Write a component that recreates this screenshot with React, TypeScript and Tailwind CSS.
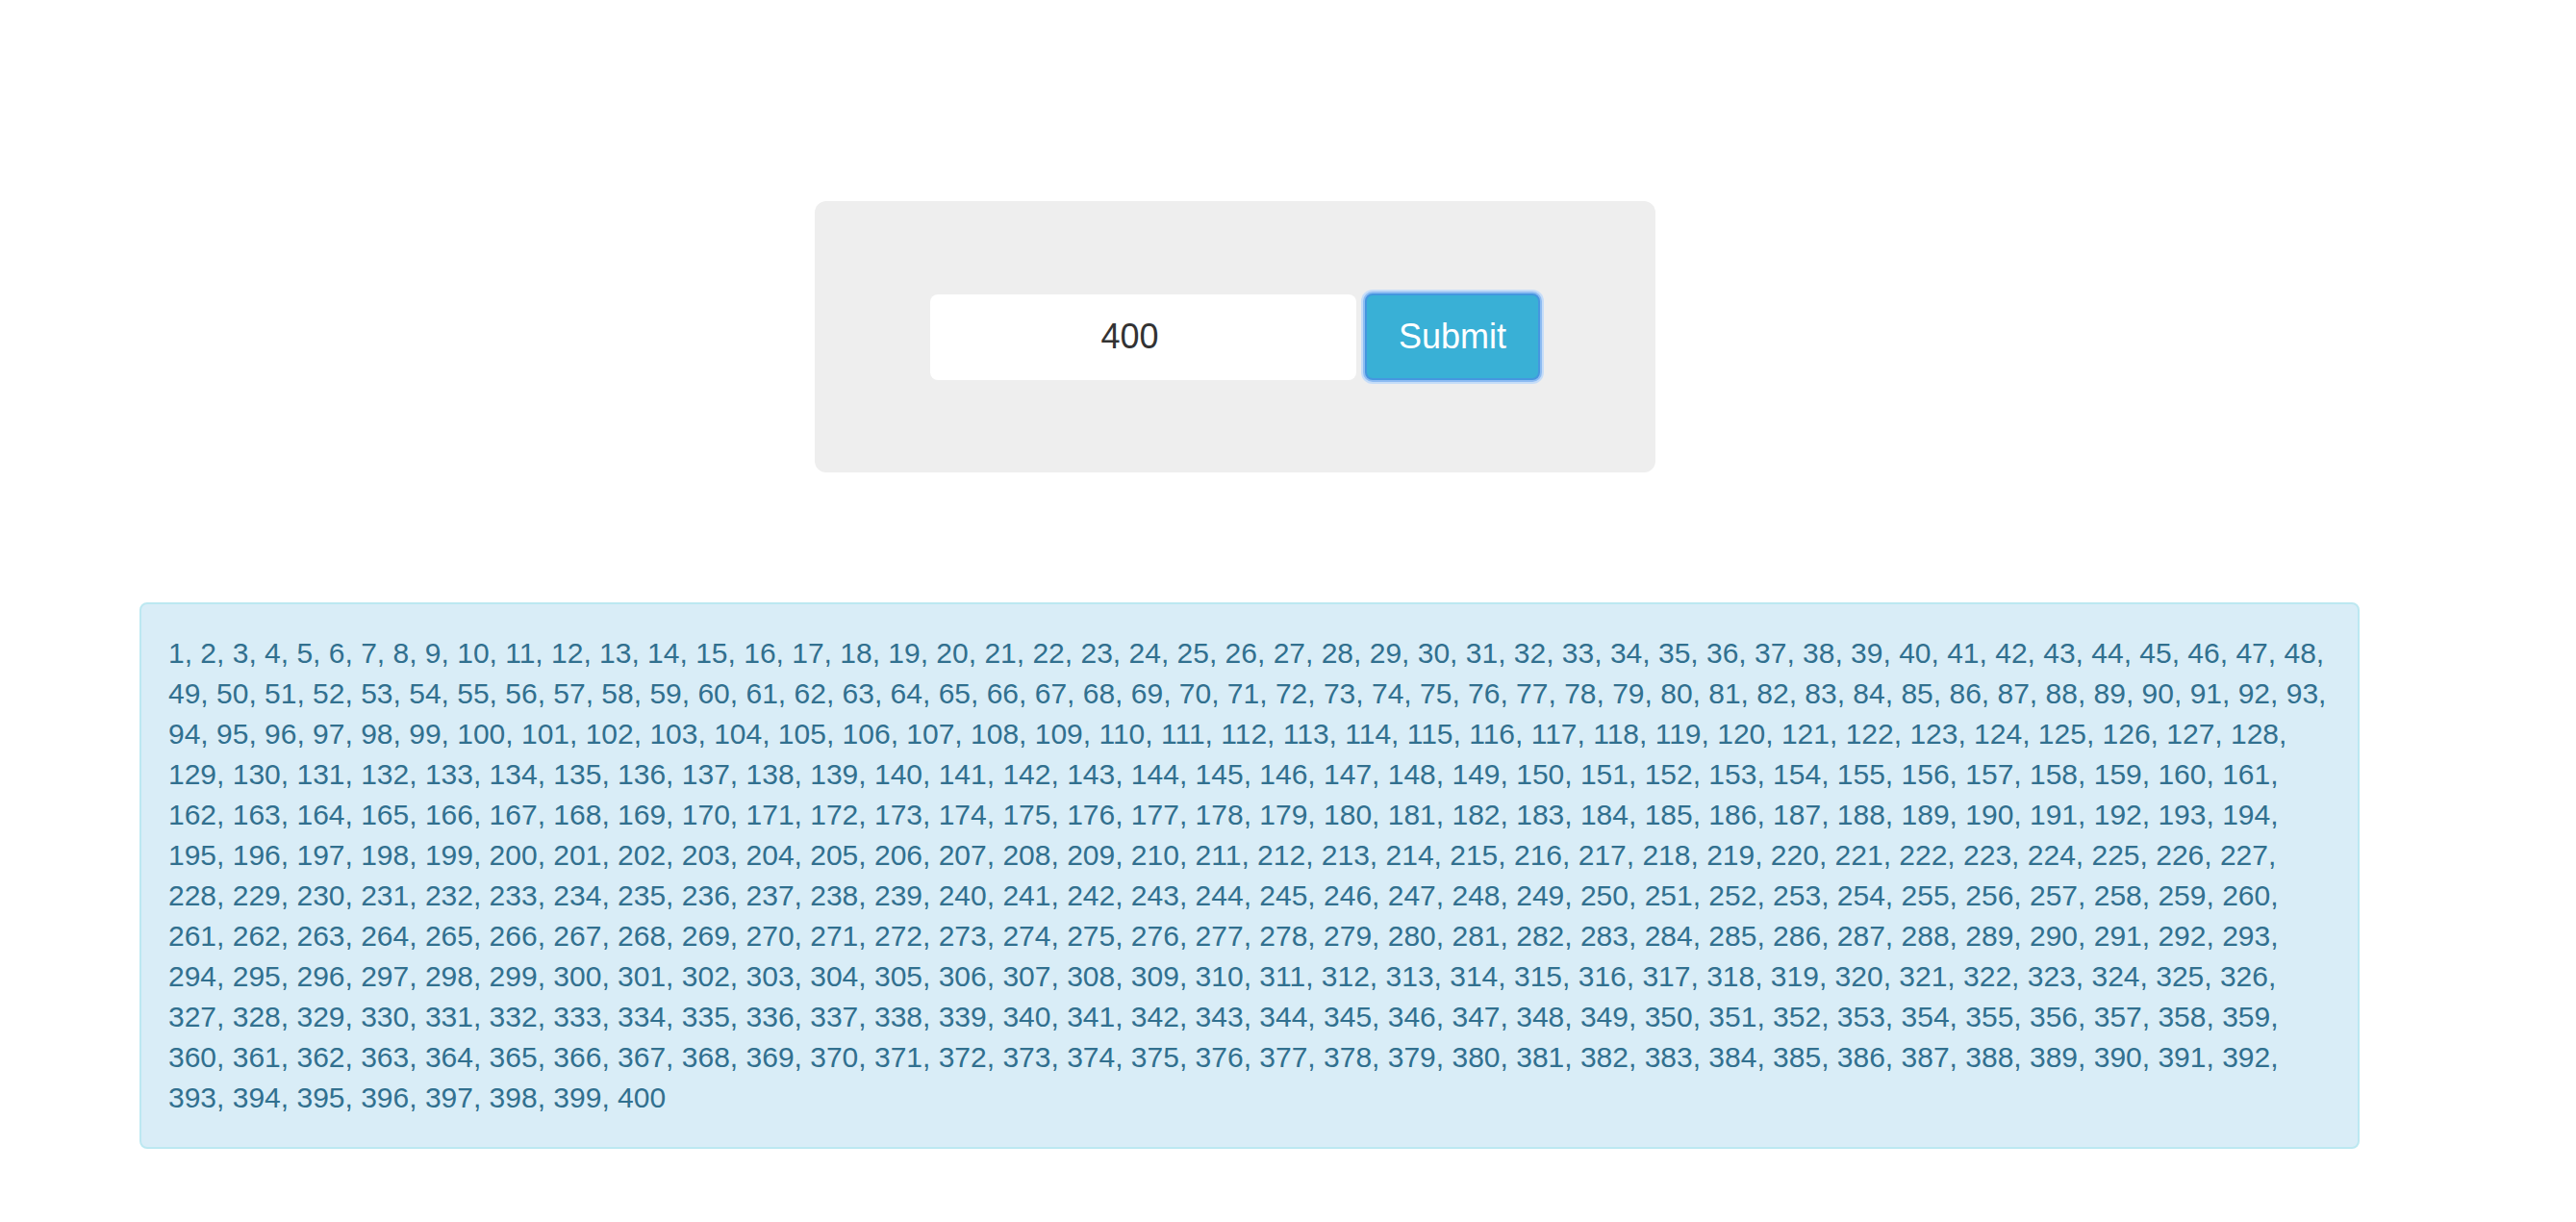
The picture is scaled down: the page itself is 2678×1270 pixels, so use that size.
import { useState } from "react";

export default function App() {
  const [value, setValue] = useState("400");
  const count = parseInt(value, 10) || 0;
  const numbers = Array.from({ length: count }, (_, i) => i + 1).join(", ");

  return (
    <div
      className="min-h-screen bg-white pt-[209px] pb-[60px]"
      style={{ fontFamily: '"Liberation Sans", Arial, sans-serif' }}
    >
      {/* Form panel */}
      <div className="ml-[847px] w-[874px] h-[282px] bg-[#eeeeee] rounded-[12px] flex items-center justify-center">
        <input
          value={value}
          onChange={(e) => setValue(e.target.value)}
          className="w-[443px] h-[89px] bg-white rounded-[8px] pr-[28px] text-center text-[36px] text-[#333333] outline-none"
        />
        <button className="ml-[9px] w-[182px] h-[90px] rounded-[8px] bg-[#39b0d6] border-2 border-[#4596df] text-white text-[36px] shadow-[0_0_0_2px_#8ebcf2,0_0_0_4px_#c6ddf8]">
          Submit
        </button>
      </div>

      {/* Result */}
      <div className="mt-[135px] ml-[145px] w-[2308px] bg-[#d9edf7] border-2 border-[#bce8f1] rounded-[8px] px-[28px] py-[30px] text-[30px] leading-[42px] text-[#31708f]">
        {numbers}
      </div>
    </div>
  );
}
